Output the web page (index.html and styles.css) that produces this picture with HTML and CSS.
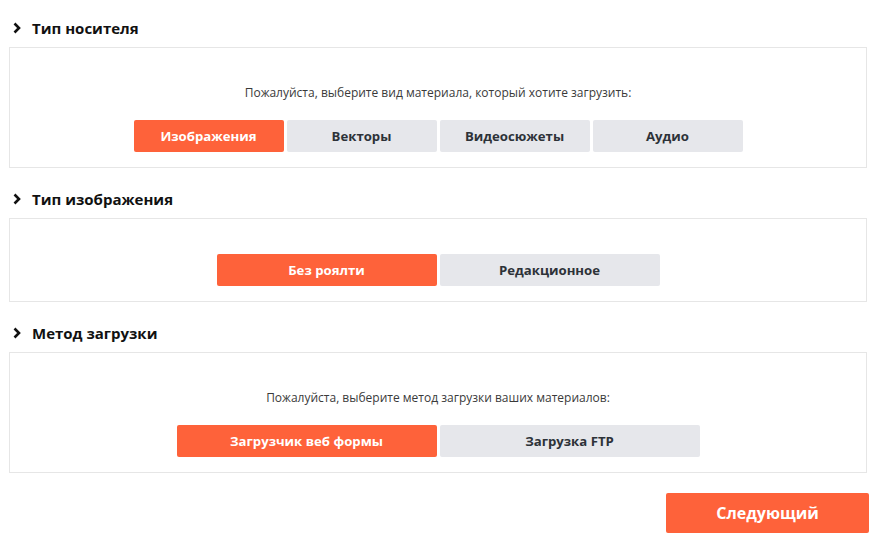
FILE: index.html
```html
<!DOCTYPE html>
<html lang="ru">
<head>
<meta charset="utf-8">
<link rel="stylesheet" href="styles.css">
</head>
<body>
<div class="page">
  <section class="section">
    <h2 class="heading"><svg class="chev" viewBox="0 0 8 12" width="8" height="12"><path d="M1.5 1.5 L6 6 L1.5 10.5" fill="none" stroke="#111" stroke-width="2.6"/></svg>Тип носителя</h2>
    <div class="panel panel-1">
      <p class="hint">Пожалуйста, выберите вид материала, который хотите загрузить:</p>
      <div class="group">
        <button class="btn btn-w150 active">Изображения</button>
        <button class="btn btn-w150">Векторы</button>
        <button class="btn btn-w150">Видеосюжеты</button>
        <button class="btn btn-w150">Аудио</button>
      </div>
    </div>
  </section>
  <section class="section">
    <h2 class="heading"><svg class="chev" viewBox="0 0 8 12" width="8" height="12"><path d="M1.5 1.5 L6 6 L1.5 10.5" fill="none" stroke="#111" stroke-width="2.6"/></svg>Тип изображения</h2>
    <div class="panel panel-2">
      <div class="group">
        <button class="btn btn-w220 active">Без роялти</button>
        <button class="btn btn-w220">Редакционное</button>
      </div>
    </div>
  </section>
  <section class="section">
    <h2 class="heading"><svg class="chev" viewBox="0 0 8 12" width="8" height="12"><path d="M1.5 1.5 L6 6 L1.5 10.5" fill="none" stroke="#111" stroke-width="2.6"/></svg>Метод загрузки</h2>
    <div class="panel panel-3">
      <p class="hint">Пожалуйста, выберите метод загрузки ваших материалов:</p>
      <div class="group">
        <button class="btn btn-w260 active">Загрузчик веб формы</button>
        <button class="btn btn-w260">Загрузка FTP</button>
      </div>
    </div>
  </section>
  <div class="actions">
    <button class="next">Следующий</button>
  </div>
</div>
</body>
</html>
```
FILE: styles.css
```css
* { box-sizing: border-box; }
html, body { margin: 0; padding: 0; background: #fff; }
body {
  font-family: "Open Sans", "Noto Sans", sans-serif;
  color: #222;
}
.page {
  padding: 17px 10px 0 9px;
  display: flex;
  flex-direction: column;
}
.section { display: flex; flex-direction: column; }
.heading {
  display: flex;
  align-items: center;
  margin: 0 0 9px 0;
  padding-left: 4px;
  font-size: 15px;
  font-weight: 700;
  line-height: 20px;
  color: #111;
  height: 21px;
}
.chev { margin-right: 11px; }
.panel {
  border: 1px solid #e6e6e6;
  display: flex;
  flex-direction: column;
  align-items: center;
  margin: 0 2px 20px 0;
}
.panel-1 { height: 121px; padding-top: 36px; }
.panel-2 { height: 84px; padding-top: 35px; }
.panel-3 { height: 121px; padding-top: 36px; }
.hint {
  margin: 0 0 19px 0;
  font-size: 12px;
  line-height: 17px;
  color: #3a3a3a;
}
.group { display: flex; gap: 3px; }
.btn {
  font-family: inherit;
  border: 0;
  border-radius: 2px;
  height: 32px;
  font-size: 13.2px;
  font-weight: 700;
  background: #e6e7eb;
  color: #2d3238;
  padding: 0;
  cursor: pointer;
}
.btn.active { background: #fe623a; color: #fff; }
.btn-w150 { width: 150px; }
.btn-w220 { width: 220px; }
.btn-w260 { width: 260px; }
.actions { display: flex; justify-content: flex-end; }
.next {
  font-family: inherit;
  width: 203px;
  height: 40px;
  border: 0;
  border-radius: 2px;
  background: #fe623a;
  color: #fff;
  font-size: 16px;
  font-weight: 700;
}
```
